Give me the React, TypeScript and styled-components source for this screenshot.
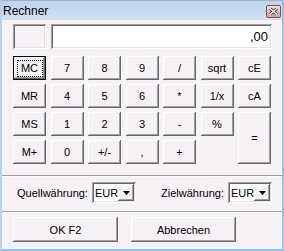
import React from 'react'
import styled, { createGlobalStyle, css } from 'styled-components'

const GlobalStyle = createGlobalStyle`
  html, body {
    margin: 0;
    padding: 0;
    background: #ffffff;
  }
  body {
    font-family: "Liberation Sans", Arial, sans-serif;
  }
`

const keys: { label: string; focus?: boolean; tall?: boolean }[][] = [
  [{ label: 'MC', focus: true }, { label: '7' }, { label: '8' }, { label: '9' }, { label: '/' }, { label: 'sqrt' }, { label: 'cE' }],
  [{ label: 'MR' }, { label: '4' }, { label: '5' }, { label: '6' }, { label: '*' }, { label: '1/x' }, { label: 'cA' }],
  [{ label: 'MS' }, { label: '1' }, { label: '2' }, { label: '3' }, { label: '-' }, { label: '%' }, { label: '=', tall: true }],
  [{ label: 'M+' }, { label: '0' }, { label: '+/-' }, { label: ',' }, { label: '+' }],
]

const CurrencySelect = () => (
  <Select>
    <SelectValue>EUR</SelectValue>
    <DropButton>
      <svg width="7" height="4" viewBox="0 0 7 4">
        <path d="M0 0 H7 L3.5 4 Z" fill="#000" />
      </svg>
    </DropButton>
  </Select>
)

const App = () => {
  return (
    <>
      <GlobalStyle />
      <Window>
        <TitleBar>
          <Title>Rechner</Title>
          <CloseBox>
            <svg width="9" height="7" viewBox="0 0 9 7">
              <path d="M1 0.5 L8 6.5 M8 0.5 L1 6.5" stroke="#3a3a3a" strokeWidth="3" />
              <path d="M1 0.5 L8 6.5 M8 0.5 L1 6.5" stroke="#ffffff" strokeWidth="1.4" />
            </svg>
          </CloseBox>
        </TitleBar>
        <Body>
          <DisplayRow>
            <MemoryBox />
            <Display>,00</Display>
          </DisplayRow>
          <KeyGrid>
            {keys.map((row, r) =>
              row.map((k, c) => (
                <Key key={`${r}-${c}`} $focus={k.focus} $tall={k.tall}>
                  {k.focus ? <FocusRing>{k.label}</FocusRing> : k.label}
                </Key>
              ))
            )}
          </KeyGrid>
          <Separator $gap={11} />
          <CurrencyRow>
            <CurrencyGroup>
              <Label>Quellwährung:</Label>
              <CurrencySelect />
            </CurrencyGroup>
            <CurrencyGroup>
              <Label>Zielwährung:</Label>
              <CurrencySelect />
            </CurrencyGroup>
          </CurrencyRow>
          <Separator $gap={0} />
          <ActionRow>
            <ActionButton>OK F2</ActionButton>
            <ActionButton>Abbrechen</ActionButton>
          </ActionRow>
        </Body>
      </Window>
    </>
  )
}

export default App

const bevel = css`
  box-shadow:
    inset -1px -1px 0 #696969,
    inset 1px 1px 0 #ffffff,
    inset -2px -2px 0 #a0a0a0,
    inset 2px 2px 0 #f4f4f4;
`

const sunken = css`
  box-shadow:
    inset 1px 1px 0 #a0a0a0,
    inset -1px -1px 0 #ffffff,
    inset 2px 2px 0 #696969,
    inset -2px -2px 0 #e3e3e3;
`

const Window = styled.div`
  width: 284px;
  height: 251px;
  box-sizing: border-box;
  display: flex;
  flex-direction: column;
  background: #f5f1f5;
  border-left: 2px solid #b9d3ee;
  border-right: 2px solid #8ec6f2;
  border-bottom: 2px solid #8ec6f2;
  overflow: hidden;
`

const TitleBar = styled.div`
  height: 20px;
  flex: none;
  display: flex;
  align-items: center;
  justify-content: space-between;
  margin: 0 -2px;
  padding: 0 3px 0 3px;
  background: linear-gradient(#bcd3ec, #d4e2f2);
  border-top: 1px solid #9fb4cc;
  box-sizing: border-box;
`

const Title = styled.span`
  font-size: 12px;
  color: #000;
  line-height: 1;
`

const CloseBox = styled.div`
  width: 13px;
  height: 11px;
  margin-top: 1px;
  border: 1px solid #8a4b44;
  border-radius: 2px;
  background: linear-gradient(#f2dcd8, #c9a7a4);
  display: flex;
  align-items: center;
  justify-content: center;
`

const Body = styled.div`
  flex: 1;
  display: flex;
  flex-direction: column;
`

const DisplayRow = styled.div`
  display: flex;
  gap: 5px;
  padding: 4px 10px 0 11px;
`

const MemoryBox = styled.div`
  width: 33px;
  height: 25px;
  box-sizing: border-box;
  background: #f5f1f5;
  ${sunken}
`

const Display = styled.div`
  flex: 1;
  height: 25px;
  box-sizing: border-box;
  background: #ffffff;
  ${sunken}
  display: flex;
  align-items: center;
  justify-content: flex-end;
  padding-right: 4px;
  font-size: 13px;
  color: #000;
`

const KeyGrid = styled.div`
  display: grid;
  grid-template-columns: repeat(7, 33px);
  grid-auto-rows: 24px;
  column-gap: 4.5px;
  row-gap: 4px;
  padding: 7px 0 0 11px;
`

const Key = styled.div<{ $focus?: boolean; $tall?: boolean }>`
  box-sizing: border-box;
  background: #f5f1f5;
  display: flex;
  align-items: center;
  justify-content: center;
  font-size: 11px;
  color: #000;
  ${bevel}
  ${(p) =>
    p.$tall &&
    css`
      grid-row: span 2;
    `}
  ${(p) =>
    p.$focus &&
    css`
      box-shadow:
        inset 0 0 0 1px #000,
        inset -2px -2px 0 #696969,
        inset 2px 2px 0 #ffffff,
        inset -3px -3px 0 #a0a0a0;
    `}
`

const FocusRing = styled.span`
  width: 26px;
  height: 17px;
  box-sizing: border-box;
  border: 1px dotted #000;
  display: flex;
  align-items: center;
  justify-content: center;
`

const Separator = styled.div<{ $gap: number }>`
  height: 1px;
  background: #a0a0a0;
  border-bottom: 1px solid #ffffff;
  margin-top: ${(p) => p.$gap}px;
`

const CurrencyRow = styled.div`
  display: flex;
  justify-content: space-between;
  align-items: center;
  padding: 5px 10px 8px 15px;
`

const CurrencyGroup = styled.div`
  display: flex;
  align-items: center;
  gap: 4px;
`

const Label = styled.span`
  font-size: 11px;
  color: #000;
`

const Select = styled.div`
  width: 44px;
  height: 21px;
  box-sizing: border-box;
  background: #ffffff;
  ${sunken}
  display: flex;
  align-items: stretch;
  padding: 2px;
`

const SelectValue = styled.span`
  flex: 1;
  font-size: 11px;
  color: #000;
  display: flex;
  align-items: center;
  padding-left: 1px;
`

const DropButton = styled.div`
  width: 16px;
  background: #f5f1f5;
  ${bevel}
  display: flex;
  align-items: center;
  justify-content: center;
`

const ActionRow = styled.div`
  display: flex;
  gap: 13px;
  padding: 4px 0 0 11px;
`

const ActionButton = styled.div`
  width: 105px;
  height: 25px;
  box-sizing: border-box;
  background: #f5f1f5;
  ${bevel}
  display: flex;
  align-items: center;
  justify-content: center;
  font-size: 11px;
  color: #000;
`
